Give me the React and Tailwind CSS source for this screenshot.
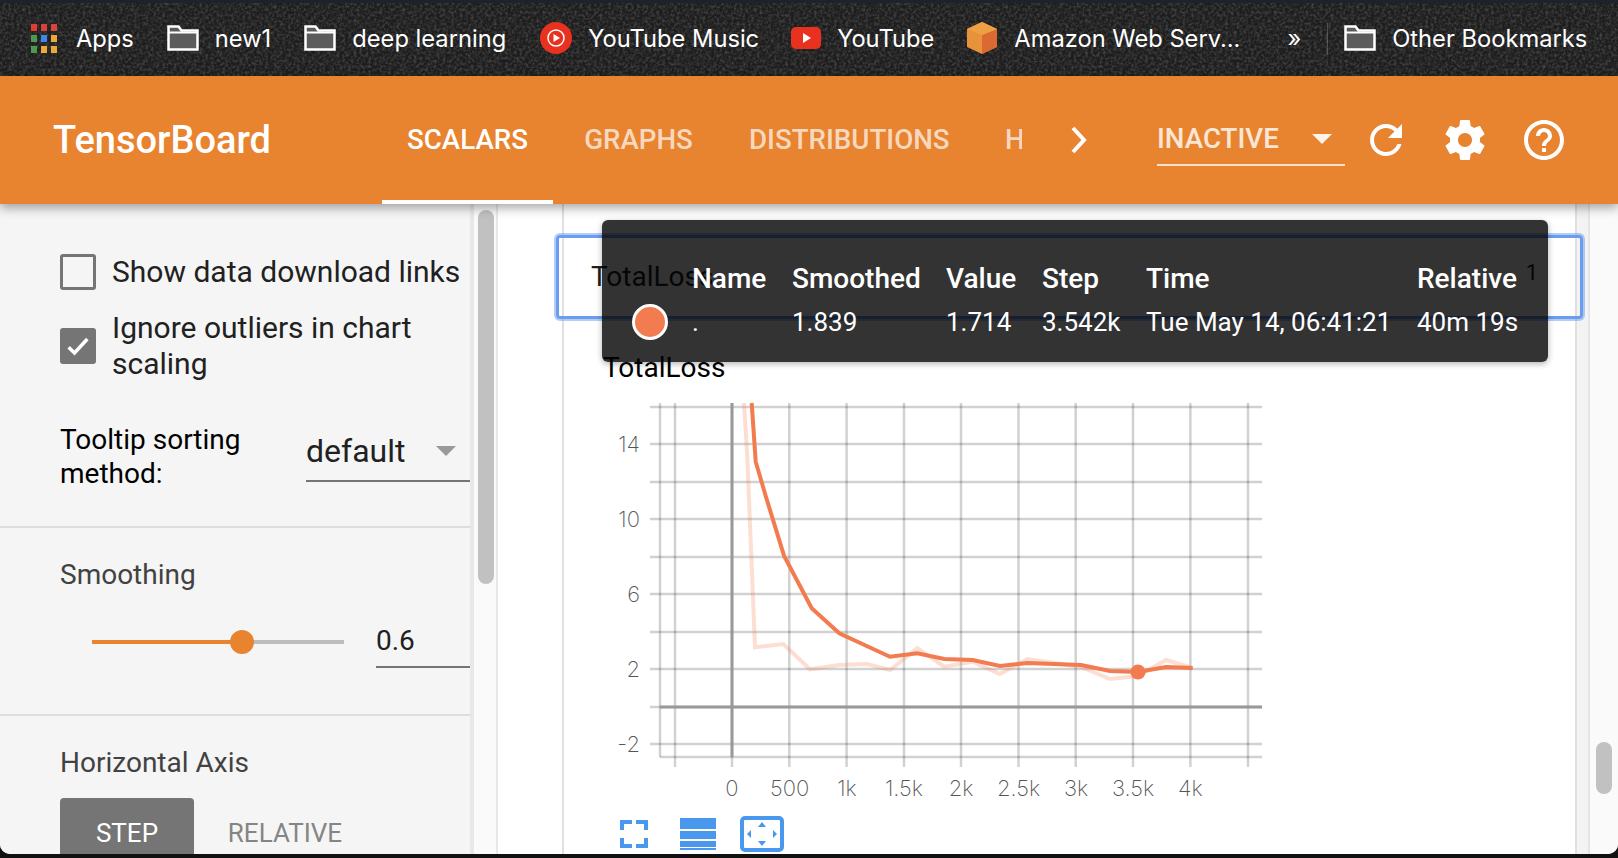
import React from 'react';

const roboto = '[font-family:Roboto,sans-serif]';

const xTicks = [675, 732, 789.3, 846.6, 904, 961, 1018.5, 1075.7, 1133, 1190.4, 1248];
const yTicks = [407, 444, 482, 519, 557, 594, 632, 669, 707, 744];
const yLabels = [[14, 444], [10, 519], [6, 594], [2, 669], [-2, 744]];
const xLabels = [[0, 732], [500, 789.6], ['1k', 847], ['1.5k', 904], ['2k', 961], ['2.5k', 1018.5], ['3k', 1076], ['3.5k', 1133], ['4k', 1190.4]];

const smoothed = '751.7,403 755.7,461.7 766,497 784,555.7 811.7,608.3 839.3,633.3 866.7,646 890,656.7 917.3,653.3 944.3,659 972.7,660 1000,666 1027.5,663 1054,664 1081,665 1110,671 1138,672 1166,667 1192.7,668';
const raw = '744,403 747.3,457 755,647.3 783.3,644 810,669.3 839.3,665 866.7,664 890,670 917.3,648.3 944.3,666.7 972.7,661.7 999.8,674 1027.5,659 1054,663 1081,667 1110,679 1138,676 1166,660 1192.7,668';

const Folder = () => (
  <svg width="32" height="26" viewBox="0 0 32 26" className="flex-none">
    <path d="M1.5 24.5V1.5h10l3 4h16v19z" fill="#5c5c5c" stroke="#fff" strokeWidth="2.5" />
    <path d="M1.5 7.5h29" stroke="#fff" strokeWidth="2" />
  </svg>
);

const AppsIcon = () => {
  const colors = ['#e03c31', '#d8413a', '#d8453c', '#4c9a52', '#3f86ee', '#e8a93a', '#4c9a52', '#e8a93a', '#e8a93a'];
  return (
    <div className="grid grid-cols-3 gap-[4px] w-[26px] flex-none">
      {colors.map((c, i) => (
        <div key={i} className="h-[7px]" style={{ backgroundColor: c }} />
      ))}
    </div>
  );
};

const Bookmark = ({ icon, label, className }) => (
  <div className={`flex items-center flex-none ${className || ''}`}>
    {icon}
    <span className="text-[23.7px] text-white whitespace-nowrap">{label}</span>
  </div>
);

const Tab = ({ label, active }) => (
  <div className={`relative h-full w-[171px] flex-none flex items-center justify-center text-[27.7px] font-medium whitespace-nowrap ${active ? 'text-white' : 'text-white/70'}`}>
    {label}
    {active && <div className="absolute left-0 right-0 bottom-0 h-[4px] bg-white" />}
  </div>
);

const Checkbox = ({ checked }) => (
  <div className={`w-[36px] h-[36px] flex-none rounded-[3px] border-[3px] border-[#757575] flex items-center justify-center ${checked ? 'bg-[#757575]' : ''}`}>
    {checked && (
      <svg width="28" height="28" viewBox="0 0 24 24">
        <path d="M4 13l5 5L20 6" fill="none" stroke="#fff" strokeWidth="3" />
      </svg>
    )}
  </div>
);

const Chart = () => (
  <svg width="660" height="410" viewBox="610 390 660 410" className="block">
    <g stroke="#000" strokeOpacity="0.18" strokeWidth="2.5">
      {xTicks.map((x) => <line key={x} x1={x} x2={x} y1="403" y2="767" />)}
      {yTicks.map((y) => <line key={y} x1="650" x2="1262" y1={y} y2={y} />)}
      <line x1="660" x2="660" y1="403" y2="757" />
      <line x1="660" x2="1262" y1="757" y2="757" />
    </g>
    <line x1="732" x2="732" y1="403" y2="757" stroke="#999" strokeWidth="3" />
    <line x1="660" x2="1262" y1="707" y2="707" stroke="#999" strokeWidth="3" />
    <polyline points={raw} fill="none" stroke="#f27b50" strokeOpacity="0.25" strokeWidth="4" />
    <polyline points={smoothed} fill="none" stroke="#f27b50" strokeWidth="4" />
    <circle cx="1138" cy="672" r="7.5" fill="#f27b50" />
    <g fontFamily="Inter, sans-serif" fontWeight="200" fontSize="22" fill="#555">
      {yLabels.map(([t, y]) => <text key={t} x="640" y={y + 8} textAnchor="end">{t}</text>)}
      {xLabels.map(([t, x]) => <text key={t} x={x} y="796" textAnchor="middle">{t}</text>)}
    </g>
  </svg>
);

const ChartTools = () => (
  <div className="flex items-center ml-[56px] mt-[16px]">
    <svg width="28" height="28" viewBox="0 0 28 28" className="flex-none">
      <path d="M2 10V2h10M16 2h10v8M26 18v8H16M12 26H2v-8" fill="none" stroke="#4a98ee" strokeWidth="4" />
    </svg>
    <svg width="36" height="32" viewBox="0 0 36 32" className="ml-[32px] flex-none">
      <rect width="36" height="11" fill="#4a98ee" />
      <rect y="13" width="36" height="8" fill="#4a98ee" />
      <rect y="23" width="36" height="6" fill="#4a98ee" />
      <rect y="30" width="36" height="2" fill="#4a98ee" />
    </svg>
    <svg width="44" height="36" viewBox="0 0 44 36" className="ml-[24px] flex-none">
      <rect x="2" y="2" width="40" height="32" rx="3" fill="none" stroke="#4a98ee" strokeWidth="4" />
      <path d="M22 6l4 5h-8zM22 30l4-5h-8zM7 18l4-4v8zM37 18l-4-4v8z" fill="#4a98ee" />
    </svg>
  </div>
);

const tooltipCols = 'grid grid-cols-[90px_100px_154px_96px_104px_271px_auto] items-center';

const Tooltip = () => (
  <div className={`absolute z-[2] left-[602px] top-[16px] w-[946px] h-[142px] rounded-[6px] bg-black/80 shadow-[0_2px_6px_rgba(0,0,0,0.3)] text-white text-[26px] pt-[37px] ${roboto}`}>
    <div className={`${tooltipCols} text-[28px] font-medium h-[44px]`}>
      <div />
      <div>Name</div>
      <div>Smoothed</div>
      <div>Value</div>
      <div>Step</div>
      <div>Time</div>
      <div>Relative</div>
    </div>
    <div className={`${tooltipCols} h-[42px]`}>
      <div className="pl-[30px]">
        <div className="w-[36px] h-[36px] rounded-full bg-[#f27b50] border-[3px] border-white" />
      </div>
      <div>.</div>
      <div>1.839</div>
      <div>1.714</div>
      <div>3.542k</div>
      <div>Tue May 14, 06:41:21</div>
      <div>40m 19s</div>
    </div>
  </div>
);

const Sidebar = () => (
  <aside className={`w-[470px] flex-none bg-[#f5f5f5] overflow-hidden ${roboto}`}>
    <div className="h-[324px] border-b-2 border-[#ddd] pl-[60px] pt-[50px]">
      <div className="flex items-center gap-[16px] text-[30px] leading-[36px] text-[#212121] whitespace-nowrap">
        <Checkbox />
        <span>Show data download links</span>
      </div>
      <div className="flex items-center gap-[16px] mt-[20px] text-[30px] leading-[36px] text-[#212121]">
        <Checkbox checked />
        <span>Ignore outliers in chart<br />scaling</span>
      </div>
      <div className="flex mt-[41px] items-start">
        <div className="w-[246px] text-[28px] leading-[34px] text-black">Tooltip sorting<br />method:</div>
        <div className="flex-1 h-[60px] border-b-2 border-[#757575] flex items-center justify-between pr-[14px] text-[32px] text-[#212121] mt-[-1px]">
          <span>default</span>
          <span className="w-0 h-0 border-x-[10px] border-x-transparent border-t-[10px] border-t-[#999]" />
        </div>
      </div>
    </div>
    <div className="h-[188px] border-b-2 border-[#ddd] pl-[60px] pt-[29px]">
      <div className="text-[28px] leading-[36px] text-[#424242]">Smoothing</div>
      <div className="flex items-center mt-[23px]">
        <div className="relative ml-[32px] w-[252px] h-[4px] bg-[#bdbdbd] flex-none">
          <div className="h-full w-[150px] bg-[#e8832f]" />
          <div className="absolute left-[138px] top-[-10px] w-[24px] h-[24px] rounded-full bg-[#e8832f]" />
        </div>
        <div className="ml-[32px] flex-1 h-[52px] border-b-2 border-[#757575] text-[28px] text-[#212121] flex items-center">0.6</div>
      </div>
    </div>
    <div className="pl-[60px] pt-[29px]">
      <div className="text-[28px] leading-[36px] text-[#424242]">Horizontal Axis</div>
      <div className="flex mt-[17px]">
        <div className="w-[134px] h-[70px] rounded-[4px] bg-[#757575] text-white text-[26px] flex items-center justify-center">STEP</div>
        <div className="w-[182px] h-[70px] text-[#858585] text-[26px] flex items-center justify-center">RELATIVE</div>
      </div>
    </div>
  </aside>
);

const App = () => (
  <div className="relative w-[1618px] h-[858px] overflow-hidden bg-[#111] flex flex-col [font-family:Inter,sans-serif]">
    <div className="relative h-[76px] flex-none bg-[#1d1d1d] border-t-[3px] border-[#1d2329] overflow-hidden">
      <svg className="absolute inset-0 w-full h-full" aria-hidden="true">
        <filter id="grain">
          <feTurbulence type="fractalNoise" baseFrequency="0.35" numOctaves="3" />
          <feColorMatrix values="0 0 0 0 0.6  0 0 0 0 0.6  0 0 0 0 0.6  0 0 0 1.6 -0.6" />
        </filter>
        <rect width="100%" height="100%" filter="url(#grain)" opacity="0.3" />
      </svg>
      <div className="relative flex items-center h-[71px] pl-[31px]">
        <Bookmark icon={<AppsIcon />} label="Apps" className="gap-[19px]" />
        <Bookmark icon={<Folder />} label="new1" className="ml-[33px] gap-[16px]" />
        <Bookmark icon={<Folder />} label="deep learning" className="ml-[33px] gap-[16px]" />
        <Bookmark
          className="ml-[34px] gap-[16px]"
          label="YouTube Music"
          icon={
            <svg width="32" height="32" viewBox="0 0 32 32" className="flex-none">
              <circle cx="16" cy="16" r="16" fill="#e8321f" />
              <circle cx="16" cy="16" r="8" fill="none" stroke="#fff" strokeWidth="1.5" />
              <path d="M13.5 12l6.5 4-6.5 4z" fill="#fff" />
            </svg>
          }
        />
        <Bookmark
          className="ml-[32px] gap-[16px]"
          label="YouTube"
          icon={
            <svg width="30" height="22" viewBox="0 0 30 22" className="flex-none">
              <rect width="30" height="22" rx="5" fill="#e8321f" />
              <path d="M12 6l8 5-8 5z" fill="#fff" />
            </svg>
          }
        />
        <Bookmark
          className="ml-[33px] gap-[17px]"
          label="Amazon Web Serv..."
          icon={
            <svg width="30" height="32" viewBox="0 0 30 32" className="flex-none">
              <path d="M15 0l15 7v18l-15 7-15-7V7z" fill="#e8923c" />
              <path d="M15 13l15-6v18l-15 7z" fill="#d96a32" />
              <path d="M0 7l15 6 15-6-15-7z" fill="#f0a044" />
            </svg>
          }
        />
        <span className="ml-[47px] text-[23.7px] text-white">»</span>
        <div className="ml-[26px] w-px h-[32px] bg-white/20" />
        <Bookmark icon={<Folder />} label="Other Bookmarks" className="ml-[16px] gap-[16px]" />
      </div>
    </div>

    <header className={`relative z-10 h-[128px] flex-none bg-[#e8832f] shadow-[0_4px_10px_rgba(0,0,0,0.35)] flex items-center text-white ${roboto}`}>
      <div className="w-[382px] pl-[53px] flex-none text-[38px] font-medium">TensorBoard</div>
      <div className="w-[640px] h-full flex-none flex overflow-hidden">
        <Tab label="SCALARS" active />
        <Tab label="GRAPHS" />
        <div className="h-full w-[251px] flex-none flex items-center pl-[25px] text-[27.7px] font-medium text-white/70 whitespace-nowrap">DISTRIBUTIONS</div>
        <div className="h-full flex-none flex items-center pl-[30px] text-[27.7px] font-medium text-white/70">HISTOGRAMS</div>
      </div>
      <svg width="18" height="28" viewBox="0 0 18 28" className="ml-[48px] flex-none">
        <path d="M3 2l11 12L3 26" fill="none" stroke="#fff" strokeWidth="4" />
      </svg>
      <div className="ml-[69px] w-[188px] h-[56px] flex-none border-b-2 border-white/75 flex items-center mt-[-4px] pt-[4px] text-[27.7px] font-medium text-white/80">
        <span>INACTIVE</span>
        <span className="ml-[33px] w-0 h-0 border-x-[10px] border-x-transparent border-t-[10px] border-t-white/90" />
      </div>
      <div className="ml-[17px] flex items-center gap-[31px] flex-none">
        <svg width="48" height="48" viewBox="0 0 24 24" fill="#fff">
          <path d="M17.65 6.35C16.2 4.9 14.21 4 12 4c-4.42 0-7.99 3.58-7.99 8s3.57 8 7.99 8c3.73 0 6.84-2.55 7.73-6h-2.08c-.82 2.33-3.04 4-5.65 4-3.31 0-6-2.69-6-6s2.69-6 6-6c1.66 0 3.14.69 4.22 1.78L13 11h7V4l-2.35 2.35z" />
        </svg>
        <svg width="48" height="48" viewBox="0 0 24 24" fill="#fff">
          <path d="M19.43 12.98c.04-.32.07-.64.07-.98s-.03-.66-.07-.98l2.11-1.65c.19-.15.24-.42.12-.64l-2-3.46c-.12-.22-.39-.3-.61-.22l-2.49 1c-.52-.4-1.08-.73-1.69-.98l-.38-2.65C14.46 2.18 14.25 2 14 2h-4c-.25 0-.46.18-.49.42l-.38 2.65c-.61.25-1.17.59-1.69.98l-2.49-1c-.23-.09-.49 0-.61.22l-2 3.46c-.13.22-.07.49.12.64l2.11 1.65c-.04.32-.07.65-.07.98s.03.66.07.98l-2.11 1.65c-.19.15-.24.42-.12.64l2 3.46c.12.22.39.3.61.22l2.49-1c.52.4 1.08.73 1.69.98l.38 2.65c.03.24.24.42.49.42h4c.25 0 .46-.18.49-.42l.38-2.65c.61-.25 1.17-.59 1.69-.98l2.49 1c.23.09.49 0 .61-.22l2-3.46c.12-.22.07-.49-.12-.64l-2.11-1.65zM12 15.5c-1.93 0-3.5-1.57-3.5-3.5s1.57-3.5 3.5-3.5 3.5 1.57 3.5 3.5-1.57 3.5-3.5 3.5z" />
        </svg>
        <svg width="48" height="48" viewBox="0 0 24 24" fill="#fff">
          <path d="M11 18h2v-2h-2v2zm1-16C6.48 2 2 6.48 2 12s4.48 10 10 10 10-4.48 10-10S17.52 2 12 2zm0 18c-4.41 0-8-3.59-8-8s3.59-8 8-8 8 3.59 8 8-3.59 8-8 8zm0-14c-2.21 0-4 1.79-4 4h2c0-1.1.9-2 2-2s2 .9 2 2c0 2-3 1.75-3 5h2c0-2.25 3-2.5 3-5 0-2.21-1.79-4-4-4z" />
        </svg>
      </div>
    </header>

    <div className="relative h-[650px] flex-none flex overflow-hidden rounded-b-[10px] bg-white">
      <Sidebar />
      <div className="w-[28px] flex-none bg-[#fafafa] border-l-4 border-r-2 border-[#e8e8e8] pl-[4px] pt-[6px]">
        <div className="w-[16px] h-[374px] rounded-full bg-[#c1c1c1]" />
      </div>
      <main className="w-[1079px] flex-none pl-[64px]">
        <div className={`w-[1015px] h-full border-x-2 border-[#e0e0e0] bg-white pt-[31px] ${roboto}`}>
          <div className="relative z-[1] mx-[-8px] h-[84px] border-[3px] border-[#6a9cf0] shadow-[0_0_0_2px_rgba(106,156,240,0.5)] rounded-[4px] flex items-center justify-between pl-[32px] pr-[42px] text-[28px] text-[#212121]">
            <span>TotalLoss</span>
            <span className="text-[22px] mt-[-10px]">1</span>
          </div>
          <div className="pl-[39px] mt-[32px] text-[28px] leading-[34px] text-black">TotalLoss</div>
          <div className="mt-[5px] ml-[46px]">
            <Chart />
          </div>
          <ChartTools />
        </div>
      </main>
      <div className="flex-1 bg-[#fafafa] relative">
        <div className="absolute left-0 top-0 bottom-0 w-[13px] bg-[#f3f3f3] border-r-2 border-[#e5e5e5]" />
        <div className="absolute left-[19px] top-[538px] w-[16px] h-[52px] rounded-full bg-[#c1c1c1]" />
      </div>
      <Tooltip />
    </div>
  </div>
);

export default App;
